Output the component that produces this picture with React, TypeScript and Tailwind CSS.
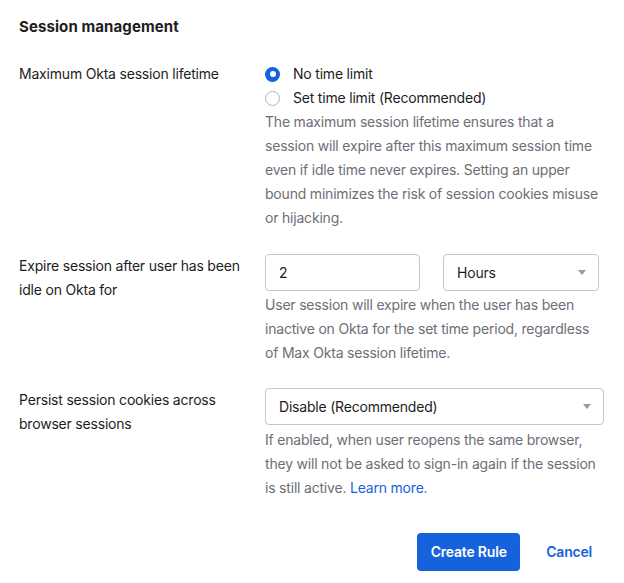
import { useState } from 'react'

function Radio({ checked, label, onSelect }: { checked: boolean; label: string; onSelect: () => void }) {
  return (
    <label className="flex h-6 cursor-pointer items-center gap-[13px]" onClick={onSelect}>
      {checked ? (
        <span className="flex h-[15px] w-[15px] items-center justify-center rounded-full bg-[#1662dd]">
          <span className="h-[6px] w-[6px] rounded-full bg-white" />
        </span>
      ) : (
        <span className="h-[15px] w-[15px] rounded-full border border-[#b4b4ba] bg-white" />
      )}
      <span className="text-[#1d1d21]">{label}</span>
    </label>
  )
}

function Caret() {
  return (
    <svg width="8" height="5" viewBox="0 0 8 5" className="shrink-0">
      <path d="M0 0h8L4 5z" fill="#9a9aa2" />
    </svg>
  )
}

export default function App() {
  const [limit, setLimit] = useState<'none' | 'set'>('none')

  return (
    <div className="min-h-[583px] bg-white px-[19px] pt-[15px] text-[14px] leading-6 tracking-[-0.2px] text-[#1d1d21] font-['Inter',sans-serif]">
      <h2 className="text-[15px] font-bold leading-6 tracking-[0.1px]">Session management</h2>

      <div className="mt-[23px] grid grid-cols-[246px_339px]">
        <div className="pr-4">Maximum Okta session lifetime</div>
        <div>
          <Radio checked={limit === 'none'} label="No time limit" onSelect={() => setLimit('none')} />
          <Radio checked={limit === 'set'} label="Set time limit (Recommended)" onSelect={() => setLimit('set')} />
          <p className="text-[#6e6e78]">
            The maximum session lifetime ensures that a session will expire after this maximum session time even if
            idle time never expires. Setting an upper bound minimizes the risk of session cookies misuse or hijacking.
          </p>
        </div>

        <div className="mt-[24px] pr-4">Expire session after user has been idle on Okta for</div>
        <div className="mt-[24px]">
          <div className="flex gap-[23px]">
            <div className="flex h-[37px] w-[155px] items-center rounded border border-[#c4c4ca] px-[13px]">2</div>
            <div className="flex h-[37px] w-[156px] items-center justify-between rounded border border-[#c4c4ca] pl-[13px] pr-[12px]">
              <span>Hours</span>
              <Caret />
            </div>
          </div>
          <p className="mt-[2px] text-[#6e6e78]">
            User session will expire when the user has been inactive on Okta for the set time period, regardless of Max
            Okta session lifetime.
          </p>
        </div>

        <div className="mt-[23px] pr-4">Persist session cookies across browser sessions</div>
        <div className="mt-[23px]">
          <div className="flex h-[37px] w-[339px] items-center justify-between rounded border border-[#c4c4ca] pl-[13px] pr-[12px]">
            <span>Disable (Recommended)</span>
            <Caret />
          </div>
          <p className="mt-[3px] text-[#6e6e78]">
            If enabled, when user reopens the same browser, they will not be asked to sign-in again if the session is
            still active. <a className="text-[#1662dd]" href="#">Learn more</a>.
          </p>
        </div>
      </div>

      <div className="mt-[33px] flex items-center justify-end pr-[13px]">
        <button className="h-[38px] w-[103px] rounded bg-[#1662dd] font-semibold text-white">Create Rule</button>
        <button className="ml-[26px] font-semibold text-[#1662dd]">Cancel</button>
      </div>
    </div>
  )
}
